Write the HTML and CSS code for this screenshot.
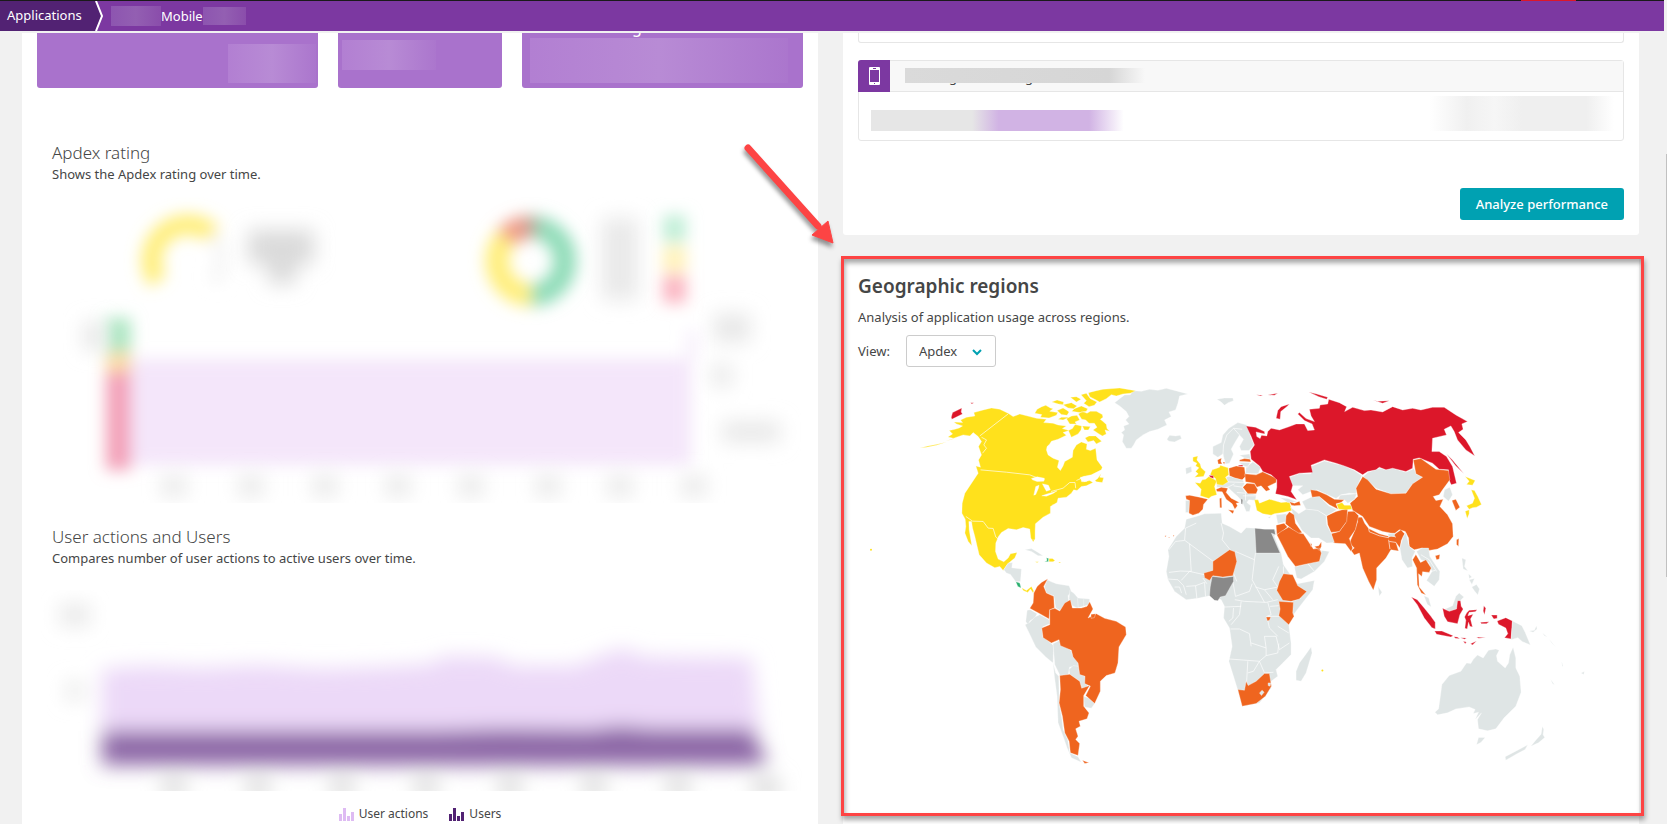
FILE: index.html
```html
<!DOCTYPE html>
<html lang="en">
<head>
  <meta charset="UTF-8">
  <title>Mobile application</title>
  <link rel="stylesheet" href="styles.css">
</head>
<body>
  <header class="topbar">
    <nav class="crumbs">
      <a class="crumb-root" href="#">Applications</a>
      <svg class="crumb-arrow" width="10" height="30" viewBox="0 0 10 30"><path class="crumb-fill" d="M0 0 L6 15 L0 30Z"/><path class="crumb-line" d="M1 0 L7 15 L1 30"/></svg>
      <a class="crumb-app" href="#"><span class="mask mask-before"></span>Mobile<span class="mask mask-after"></span></a>
    </nav>
    <span class="recording"></span>
  </header>

  <main class="dashboard">
    <section class="card left">
      <div class="tiles">
        <div class="tile"><span class="smudge smudge-end"></span></div>
        <div class="tile"><span class="smudge smudge-start"></span></div>
        <div class="tile"><span class="tile-label">g</span><span class="smudge smudge-full"></span></div>
      </div>

      <h3>Apdex rating</h3>
      <p class="sub">Shows the Apdex rating over time.</p>
      <svg class="chart apdex" viewBox="37 197 766 306">
        <defs>
          <filter id="soft" x="-50%" y="-50%" width="200%" height="200%"><feGaussianBlur stdDeviation="8"/></filter>
          <filter id="softer" x="-50%" y="-50%" width="200%" height="200%"><feGaussianBlur stdDeviation="10"/></filter>
        </defs>
        <g filter="url(#soft)">
          <path d="M158 281 A36 36 0 0 1 213 235" fill="none" stroke="#ffee7a" stroke-width="20"/>
          <path d="M213 235 A36 36 0 0 1 213 282" fill="none" stroke="#f6f6f6" stroke-width="14"/>
          <g fill="none" stroke-width="23">
            <path d="M531 227 A34 34 0 0 1 531 295" stroke="#8fdcb8"/>
            <path d="M531 295 A34 34 0 0 1 506 238" stroke="#ffee7a"/>
            <path d="M506 238 A34 34 0 0 1 531 227" stroke="#f09a85"/>
          </g>
          <path d="M525 218H538V235H525Z" fill="#b5a39b"/>
          <path d="M663 215H686V242H663Z" fill="#bfeed6"/>
          <path d="M663 246H686V272H663Z" fill="#fff2b8"/>
          <path d="M663 275H686V303H663Z" fill="#fbb3c0"/>
          <path d="M114 359H691V465H114Z" fill="#f4e6fa"/>
          <path d="M687 330H697V360H687Z" fill="#f6edfb"/>
          <path d="M106 318H131V352H106Z" fill="#ade6c2"/>
          <path d="M106 352H131V372H106Z" fill="#fbdca6"/>
          <path d="M106 372H131V470H106Z" fill="#f3a0b8"/>
        </g>
        <g filter="url(#softer)">
          <path d="M248 230H314V264H296V284H268V264H248Z" fill="#dadada"/>
          <path d="M602 218H638V300H602Z" fill="#e9e9e9"/>
          <path d="M84 322H104V350H84Z" fill="#e6e6e6"/>
          <path d="M714 314H750V342H714Z M712 365H732V386H712Z M722 422H780V442H722Z" fill="#e7e7e7"/>
          <path d="M162 476H186V496H162Z M239 476H263V496H239Z M313 476H337V496H313Z M386 476H410V496H386Z M459 476H483V496H459Z M536 476H560V496H536Z M608 476H632V496H608Z M682 476H706V496H682Z" fill="#e7e7e7"/>
        </g>
      </svg>

      <h3>User actions and Users</h3>
      <p class="sub">Compares number of user actions to active users over time.</p>
      <svg class="chart actions" viewBox="37 590 766 201">
        <g filter="url(#softer)">
          <path d="M60 604H90V626H60Z M66 682H84V700H66Z" fill="#e9e9e9"/>
          <path d="M102 669 L150 666 L200 668 L260 665 L320 669 L380 667 L430 664 L445 656 L495 657 L515 666 L575 666 L600 656 L622 648 L645 657 L752 658 L760 738 H102Z" fill="#ecd9f8"/>
          <path d="M102 731 L440 731 L500 729 L590 730 L620 726 L650 729 L752 729 L768 765 H102Z" fill="#8c66a6"/>
          <path d="M162 778H186V798H162Z M246 778H270V798H246Z M330 778H354V798H330Z M414 778H438V798H414Z M498 778H522V798H498Z M582 778H606V798H582Z M666 778H690V798H666Z M752 778H780V798H752Z" fill="#dcdcdc"/>
        </g>
      </svg>
      <div class="legend">
        <span><svg class="bars light" viewBox="0 0 15 13"><path d="M0 6H3V13H0ZM4 0H7V13H4ZM8 8H11V13H8ZM12 4H15V13H12Z"/></svg>User actions</span>
        <span><svg class="bars dark" viewBox="0 0 15 13"><path d="M0 6H3V13H0ZM4 0H7V13H4ZM8 8H11V13H8ZM12 4H15V13H12Z"/></svg>Users</span>
      </div>
    </section>

    <div class="column">
      <section class="card performance">
        <div class="box box-cut"></div>
        <div class="box">
          <div class="box-head">
            <span class="device"><svg width="11" height="18" viewBox="0 0 11 18"><path fill-rule="evenodd" d="M1 0H10Q11 0 11 1V17Q11 18 10 18H1Q0 18 0 17V1Q0 0 1 0ZM1 3V15H10V3ZM4 1V2H7V1ZM5 16V17H6V16Z"/></svg></span>
            <span class="box-name"><span>g</span><span>g</span></span>
          </div>
          <div class="box-body"><span class="metric"></span><span class="metric-end"></span></div>
        </div>
        <div class="actions-row"><button class="primary">Analyze performance</button></div>
      </section>

      <section class="card geo">
        <h2>Geographic regions</h2>
        <p>Analysis of application usage across regions.</p>
        <div class="view">
          <label for="view">View:</label>
          <div class="select-wrap">
            <select id="view"><option>Apdex</option></select>
            <svg width="10" height="7" viewBox="0 0 10 7"><path d="M1 1 L5 5 L9 1"/></svg>
          </div>
        </div>

        <svg class="map" viewBox="0 0 767 390">
          <!-- North America -->
          <g transform="translate(62 0) scale(.3333)">
            <path class="none" d="M585 68L600 56L615 45L632 44L640 32L665 34L690 28L715 31L740 25L768 32L805 42L780 48L775 70L768 90L748 96L755 110L735 120L742 135L715 148L690 155L670 165L650 180L642 195L635 205L620 205L608 185L612 165L605 158L615 150L612 138L628 132L618 120L628 110L620 95L600 78Z"/>
            <path class="fair" d="M75 185L104 176L84 171L98 162L88 152L105 148L118 144L128 138L110 132L102 126L128 128L122 120L140 112L165 108L162 98L190 90L215 84L240 88L265 100L280 110L300 102L330 110L350 115L380 118L372 128L400 130L415 135L440 138L428 146L448 152L430 158L440 166L415 178L395 184L390 192L382 200L380 210L385 225L400 235L418 242L413 262L422 272L430 258L435 245L458 232L460 212L470 195L485 186L502 192L500 208L512 212L528 205L532 240L548 262L545 270L515 285L490 290L478 298L470 302L500 290L492 306L510 302L520 308L500 318L485 320L472 332L462 330L455 340L440 352L415 355L412 368L402 374L392 380L392 400L370 412L347 432L346 455L346 478L340 486L333 475L330 448L310 443L290 450L265 446L245 458L236 470L228 490L227 515L235 538L252 546L265 535L272 522L292 518L285 535L272 545L262 555L250 572L240 560L225 564L200 550L178 525L172 500L165 470L158 445L155 425L147 425L148 450L152 475L156 498L145 485L135 460L138 440L136 418L126 400L127 370L135 340L155 310L175 280L168 258L182 262L176 240L185 225L176 200L185 185L175 170L160 158L150 168L130 165L110 172Z"/>
            <path class="fair" d="M345 100L352 88L366 80L378 76L392 84L400 86L390 94L414 98L410 106L388 114L362 112L366 104ZM396 66L412 60L432 66L430 74L416 72ZM430 74L455 68L472 78L462 86L445 84ZM452 52L470 50L484 58L470 66ZM412 92L430 84L440 90L448 96L442 106L425 104ZM456 94L464 86L485 78L504 86L500 94L480 98ZM484 44L500 40L512 56L532 66L524 76L508 80L492 70L500 62ZM506 38L530 32L550 28L600 24L648 32L632 40L610 42L590 48L575 44L560 56L540 66L525 58L510 50ZM476 102L488 94L502 100L512 94L530 94L548 104L550 112L542 118L552 126L560 134L562 146L570 154L556 150L560 162L548 168L538 162L520 150L532 142L524 130L508 130L498 120L486 118ZM440 116L456 108L472 106L480 120L466 126L470 132L450 132ZM446 152L458 146L466 134L486 138L484 150L475 162L455 172ZM488 138L512 140L506 150L494 150ZM496 174L508 168L528 168L546 184L530 192L522 182L505 186ZM448 112L430 120L415 118L425 112ZM526 302L534 296L545 280L540 292L552 294L548 308L530 306Z"/>
            <path class="fair" d="M0 204L24 198L48 194L80 186L50 196L20 202Z"/>
            <path class="poor" d="M94 112L98 98L126 84L124 96L128 102L108 112L96 118ZM152 68L162 68L156 72Z"/>
            <path class="water" d="M335 296L352 291L374 295L372 304L352 305L338 300ZM342 346L348 320L358 316L356 325L348 344ZM368 312L386 316L392 330L380 334L372 320ZM366 348L384 342L400 337L412 333L400 341L380 349Z"/>
            <path class="border" d="M182 270L260 277L330 285L350 293L375 300M180 168L265 102M138 410L158 424L190 425L205 445L220 446L228 472L236 478M394 335L430 325L450 308L466 308L468 325M185 172L200 180L192 195L200 205L188 220M400 374L402 384"/>
            <path class="water" d="M482 292L510 290L502 304L486 306Z"/>
          </g>

          <!-- Central and South America -->
          <g transform="translate(142 160) scale(.3333)">
            <path class="none" d="M12 90L25 70L38 68L36 84L65 88L62 125L48 126L32 104L20 100ZM75 30L95 26L115 38L130 48L115 48L95 35Z"/>
            <path class="good" d="M48 126L60 130L64 145L54 140ZM140 54L147 56L146 66L134 65L142 62Z"/>
            <path class="fair" d="M66 144L80 152L95 140L102 154L100 160L92 148L84 158L70 152ZM148 56L158 56L166 62L160 66L148 66ZM106 66L117 66L112 69ZM176 67L184 67L180 70ZM96 0L103 0L102 6Z"/>
            <path class="none" d="M142 120L155 126L170 132L208 138L215 155L205 168L207 185L180 212L168 205L162 168L140 160L134 142Z"/>
            <path class="none" d="M210 152L222 160L235 175L270 178L268 195L232 205L218 198L208 178ZM233 175L236 205M252 178L252 200"/>
            <path class="none" d="M82 212L92 210L112 222L105 235L90 244L86 260L78 245Z"/>
            <path class="none" d="M76 255L90 248L105 232L120 225L148 240L150 252L128 262L128 290L150 308L162 318L160 370L138 352L108 322L92 288Z"/>
            <path class="none" d="M160 312L180 302L215 335L222 355L235 360L236 380L210 382L206 404L182 410L165 375Z"/>
            <path class="none" d="M208 390L220 378L236 380L242 404L262 412L268 430L258 446L240 445L240 425L210 405Z"/>
            <path class="none" d="M160 370L168 400L177 410L178 460L178 490L186 535L190 570L204 600L210 640L235 652L245 668L215 655L202 625L190 590L175 550L172 470L164 410Z"/>
            <path class="none" d="M252 470L268 476L285 492L275 506L254 502Z"/>
            <path class="low" d="M102 160L112 140L125 128L144 117L132 140L140 160L162 170L164 205L150 210L148 238L120 222L90 206L100 190Z"/>
            <path class="low" d="M150 210L165 206L180 214L195 190L212 180L218 205L245 205L262 200L270 186L280 208L265 235L290 222L315 236L350 245L378 262L380 285L358 322L355 370L346 400L320 408L302 425L302 455L285 492L258 468L272 440L255 432L256 410L240 405L235 370L220 352L215 332L182 318L178 300L155 310L130 294L126 265L150 255Z"/>
            <path class="low" d="M180 408L210 404L240 425L246 446L270 438L252 468L252 500L268 520L262 538L238 545L242 560L228 568L235 590L228 600L240 612L235 648L212 640L208 605L195 580L188 530L178 490L182 450ZM248 662L268 670L255 672Z"/>
            <path class="low" d="M274 224L288 222L284 234L274 236Z"/>
          </g>

          <!-- Africa -->
          <g transform="translate(292 120) scale(.3333)">
            <path class="none" d="M110 58L140 50L165 42L215 40L218 70L240 80L275 100L290 84L318 85L380 92L375 110L395 160L402 195L430 235L445 252L495 242L490 270L455 315L432 345L418 375L425 430L425 465L400 490L380 510L385 530L365 545L365 565L330 610L280 620L265 572L255 540L238 485L248 440L240 385L222 355L225 320L215 300L190 290L180 288L145 296L110 300L75 275L55 240L50 215L58 170L55 150L80 110L105 85Z"/>
            <path class="none" d="M485 442L488 460L470 520L455 545L440 542L440 515L450 490L465 470Z"/>
            <path class="border" d="M58 150L78 125L105 122L108 85L140 70M106 122L190 184M120 132L125 215L92 214L58 218M215 70L222 100L218 120L230 135L242 150M258 155L315 180L318 160M315 180L308 240L320 262L345 308M318 262L345 270L385 262M250 245L258 290L300 275L308 252M250 215L262 245M256 300L285 305L350 308L385 300M355 308L365 345L352 350L360 385L385 410M275 305L270 345L245 375M243 388L270 388L300 402L305 440M305 430L350 445L345 410L380 410M238 478L330 485L350 468L350 445M350 468L385 460M295 485L290 570M330 485L312 515L295 520M330 485L345 520L372 518M380 410L390 450L420 430M385 460L388 432M225 322L275 320M252 325L250 355L238 365M55 238L85 240L102 258L110 285M110 260L138 258L142 296M95 242L120 215L165 225M138 258L165 248L168 290M160 235L172 252M75 262L90 262L96 280M362 320L388 318M355 350L390 350M402 200L402 222M425 305L455 295M385 380L418 400M345 270L370 300M388 200L370 240L385 262"/>
            <path class="low" d="M163 220L190 212L190 185L240 150L256 156L262 185L250 228L220 232L190 228L180 242L165 234Z"/>
            <path class="unknown" d="M188 230L222 234L252 230L252 245L238 270L228 288L212 292L205 303L195 302L180 288L182 262Z"/>
            <path class="unknown" d="M316 85L345 88L375 88L378 105L366 100L392 160L320 160Z"/>
            <path class="low" d="M402 222L430 225L445 258L472 275L450 298L425 305L400 302L382 272L390 245Z"/>
            <path class="low" d="M388 305L405 306L432 308L430 340L434 350L418 375L388 348L392 328Z"/>
            <path class="low" d="M350 352L364 352L360 362L354 364Z"/>
            <path class="low" d="M265 570L285 572L290 545L296 558L320 545L345 522L360 522L366 560L348 590L320 612L278 620Z"/>
            <path class="none" d="M330 580L338 572L344 578L336 588ZM356 550L364 550L362 560L356 558Z"/>
            <path class="low" d="M46 108L50 108L49 111L46 111ZM56 112L60 112L59 115ZM70 107L74 106L72 111Z"/>
          </g>

          <!-- Europe -->
          <g transform="translate(302 0) scale(.3333)">
            <path class="none" d="M22 178L30 166L48 168L62 166L66 176L45 186L28 184ZM172 58L195 54L220 54L222 62L206 68L195 76L185 66ZM78 265L95 260L97 276L80 283Z"/>
            <path class="none" d="M160 222L160 200L185 188L190 165L208 145L235 128L262 135L268 150L275 175L284 195L268 212L245 212L240 200L252 178L240 165L225 190L215 208L222 222L210 250L198 252L190 222L175 232Z"/>
            <path class="border" d="M190 228L192 195L202 165L222 145L240 165M222 145L248 148"/>
            <path class="none" d="M240 226L270 222L274 238L255 234ZM238 248L272 248L265 262L252 258ZM260 262L280 246L304 262L296 282L258 280Z"/>
            <path class="none" d="M78 362L90 362L88 398L78 398Z"/>
            <path class="none" d="M172 314L205 305L200 292L215 288L250 300L255 312L248 322L258 338L290 345L288 362L268 360L262 368L274 378L270 395L260 395L248 365L235 350L218 335L205 322L172 322Z"/>
            <path class="border" d="M205 306L255 308M222 318L248 322M205 322L225 312M232 338L258 340L258 362M250 348L290 348M210 288L250 300"/>
            <path class="fair" d="M100 232L115 228L112 240L122 252L125 264L138 276L132 290L105 292L116 282L108 275L118 264L108 258L112 250L100 244Z"/>
            <path class="fair" d="M106 308L122 310L128 300L138 298L148 290L172 303L165 320L172 345L155 350L148 356L122 348L125 328Z"/>
            <path class="fair" d="M152 284L158 270L170 266L180 262L182 256L206 264L208 285L198 292L206 306L190 316L172 314L168 296Z"/>
            <path class="poor" d="M148 286L162 288L162 296L152 292ZM236 256L250 255L250 260L238 260Z"/>
            <path class="low" d="M78 348L90 346L120 352L145 358L132 374L130 388L118 400L100 406L88 400L90 362L80 358ZM174 240L186 234L184 244L188 252L176 252ZM190 246L196 246L194 254ZM208 265L230 258L255 262L258 290L248 300L225 294L210 288Z"/>
            <path class="low" d="M170 328L185 322L205 325L200 338L215 355L240 368L230 370L234 378L226 388L218 372L200 358L188 336L172 335ZM206 390L224 392L220 402ZM180 356L186 354L187 384L181 384Z"/>
            <path class="low" d="M250 322L262 310L285 312L295 330L290 342L265 342ZM256 282L290 285L310 276L335 288L352 295L350 308L325 320L332 330L320 334L305 318L292 322L285 310L258 306ZM240 240L255 236L272 238L274 246L240 244Z"/>
            <path class="fair" d="M285 360L296 360L300 370L330 358L365 368L390 366L398 392L370 398L345 402L335 406L310 402L292 392Z"/>
            <path class="none" d="M362 354L385 356L412 366L385 368ZM350 405L382 402L380 425L355 432ZM325 412L335 410L330 415Z"/>
            <path class="low" d="M390 366L405 370L420 364L424 376L405 378L396 376Z"/>
            <path class="unknown" d="M244 356L250 360L249 374L245 370Z"/>
          </g>

          <!-- Asia -->
          <g transform="translate(382 0) scale(.3333)">
            <path class="none" d="M150 292L180 282L215 282L215 260L255 243L290 252L315 258L345 272L368 288L362 300L352 325L350 342L330 340L305 345L290 356L265 345L232 330L215 335L190 345L175 330L190 318L160 318Z"/>
            <path class="none" d="M372 290L385 278L420 265L440 270L460 265L500 277L525 266L530 282L550 292L520 312L500 340L455 342L410 325Z"/>
            <path class="poor" d="M20 138L48 142L75 155L76 162L50 156L52 170L62 176L66 166L82 168L85 155L95 145L120 150L150 140L170 132L195 132L205 152L225 150L218 132L195 122L175 102L180 98L200 116L225 125L215 108L210 88L240 85L242 75L265 72L268 58L300 68L322 80L316 95L340 82L375 92L395 90L430 96L460 80L490 90L520 85L545 90L580 82L615 82L650 105L685 125L668 132L672 148L658 158L680 180L692 200L707 228L680 210L655 180L645 155L635 138L615 148L622 165L580 175L578 215L600 215L622 230L640 260L652 310L636 315L625 290L628 270L600 268L580 250L540 234L522 238L520 265L500 275L460 265L440 270L420 262L410 270L385 275L370 285L345 270L315 258L290 250L255 240L215 256L220 278L180 280L150 290L160 316L155 335L172 360L145 350L108 342L112 322L112 300L95 285L70 275L60 258L35 238L32 215L45 195L35 170Z"/>
            <path class="poor" d="M110 115L115 92L125 80L150 72L142 80L124 95L122 118ZM208 36L232 42L265 52L262 58L238 50ZM400 60L415 64L450 62L430 70ZM622 222L640 240L674 282L650 258ZM50 44L70 46L64 48ZM85 45L115 40L105 46Z"/>
            <path class="low" d="M370 290L385 300L410 328L455 342L500 340L520 312L550 292L530 282L522 240L545 236L590 268L628 272L632 300L610 330L600 345L582 350L590 362L612 358L602 380L625 405L640 432L642 470L625 492L595 508L570 512L548 505L525 510L510 500L508 475L498 455L480 450L465 462L430 455L390 440L370 410L340 392L332 370L355 350L350 325Z"/>
            <path class="low" d="M350 412L368 412L376 430L388 446L420 462L450 470L468 462L485 450L496 462L486 482L482 505L470 488L478 514L455 510L440 535L412 565L412 600L402 632L388 605L370 565L360 520L345 526L335 512L345 505L330 490L345 455L355 425Z"/>
            <path class="low" d="M275 462L300 455L318 430L325 395L345 394L358 408L354 425L348 450L330 476L340 505L335 515L318 492L282 490Z"/>
            <path class="low" d="M262 408L290 395L325 385L322 425L300 455L275 458L265 435Z"/>
            <path class="border" d="M388 446L390 456L420 468L448 474L450 466M448 480L452 508M470 488L450 485M448 464L470 472"/>
            <path class="none" d="M446 462L466 460L466 470L448 470Z"/>
            <path class="none" d="M302 346L352 342L346 358L325 370L315 360L296 360Z"/>
            <path class="none" d="M188 365L215 352L240 350L268 378L292 390L262 408L235 392L200 388Z"/>
            <path class="low" d="M213 330L232 332L262 345L285 358L315 360L305 368L290 372L296 388L270 375L240 350L218 352Z"/>
            <path class="fair" d="M292 374L308 368L315 376L334 376L338 388L318 390L298 388Z"/>
            <path class="none" d="M153 382L178 402L200 388L235 392L260 408L262 435L275 460L285 488L262 490L238 475L215 475L188 452L165 412Z"/>
            <path class="none" d="M165 562L205 552L225 575L185 598L172 595ZM205 550L240 545L246 512L270 515L255 545L225 575Z"/>
            <path class="low" d="M140 408L150 396L164 405L168 430L188 458L175 462L150 442L138 432ZM110 436L134 430L144 442L120 462L112 464Z"/>
            <path class="low" d="M112 465L125 455L148 442L178 460L192 462L210 490L222 508L240 505L246 520L240 545L205 552L168 560L145 530L130 500ZM214 488L218 496L214 500ZM225 500L238 498L246 486L246 500L240 512Z"/>
            <path class="none" d="M482 505L492 470L500 460L510 500L528 515L518 535L520 560L505 565L488 540Z"/>
            <path class="none" d="M532 515L548 505L568 505L572 530L602 575L600 600L585 620L562 602L578 575L568 548L545 540Z"/>
            <path class="border" d="M545 525L570 540L592 575M562 578L588 572"/>
            <path class="low" d="M520 540L530 524L544 548L560 540L576 565L570 578L550 576L548 590L538 582L540 622L560 646L546 640L534 615L532 565ZM588 528L602 524L600 538L592 540ZM652 480L659 476L658 500L652 494ZM638 362L650 358L662 382L650 392Z"/>
            <path class="none" d="M612 350L616 330L632 322L640 345L628 364ZM416 620L428 638L420 650Z"/>
            <path class="fair" d="M678 290L708 302L700 316L682 314L690 304ZM696 330L706 332L716 350L727 374L712 382L700 384L690 388L682 378L700 370L706 355ZM678 394L690 390L690 402L684 416Z"/>
          </g>

          <!-- Oceania -->
          <g transform="translate(532 120) scale(.3333)">
            <path class="none" d="M218 175L230 180L226 200L236 214L222 208ZM248 262L262 254L271 268L266 286L256 274ZM238 222L248 232L240 236ZM240 240L256 236L248 254ZM104 288L118 294L126 322L114 314ZM168 328L190 318L200 290L210 280L224 292L212 304L205 306L202 328L180 335Z"/>
            <path class="poor" d="M160 326L180 335L202 328L205 303L214 303L216 320L222 328L212 345L205 372L175 366L165 350ZM66 292L84 300L105 325L125 350L138 368L138 388L128 384L105 355L84 315ZM136 394L158 394L192 408L185 412L142 404ZM194 411L204 412L212 417L198 416ZM214 414L232 415L226 419ZM222 425L232 427L228 432ZM244 432L262 424L250 436ZM232 340L240 332L264 330L258 336L240 338L236 348L252 344L244 358L250 382L242 380L238 368L234 388L227 386L230 362L226 352ZM284 318L290 326L286 345L282 334ZM274 368L300 366L292 372L276 372ZM306 346L324 346L324 356L314 358ZM324 364L350 354L370 364L366 418L346 414L356 402L350 385L328 374ZM262 412L290 414L268 416Z"/>
            <path class="none" d="M370 364L398 378L408 398L424 436L400 426L386 414L366 420ZM420 394L436 392L442 378L444 388L432 398ZM460 400L475 412L466 408ZM480 418L500 442L488 430ZM485 540L497 556L490 552ZM576 520L586 516L584 525ZM518 486L522 500L519 500Z"/>
            <path class="none" d="M137 638L148 628L152 600L158 555L180 528L215 515L232 490L245 492L252 480L265 466L282 475L298 452L320 448L330 452L322 468L325 485L348 505L358 490L362 465L372 443L380 475L380 505L392 530L396 578L380 620L345 655L320 688L295 694L268 688L265 660L277 640L258 660L268 638L252 642L258 630L240 622L200 628L175 640L145 646Z"/>
            <path class="none" d="M268 714L288 714L276 728L262 736ZM460 680L464 690L462 706L467 714L448 730L425 740L440 722L456 704ZM348 772L380 755L416 736L408 750L385 762L350 782Z"/>
          </g>
          <circle class="fair" cx="13" cy="170" r="1"/>
          <circle class="fair" cx="465" cy="291" r="1"/>
        </svg>

        <svg class="pointer" width="104" height="112" viewBox="0 0 104 112">
          <path d="M10 12L80 90" stroke-linecap="round"/>
          <path class="tip" d="M95 107L90 85L74 99Z"/>
        </svg>
      </section>
    </div>
    <span class="scroll-thumb"></span>
  </main>
</body>
</html>
```
FILE: styles.css
```css
* {
  box-sizing: border-box;
}

body {
  margin: 0;
  height: 100vh;
  overflow: hidden;
  display: flex;
  flex-direction: column;
  background-color: #f1f1f1;
  color: #454646;
  font-family: "Noto Sans", "Open Sans", sans-serif;
  font-size: 13px;
  line-height: 20px;
}

h2, h3, p {
  margin: 0;
}

/* top bar */
.topbar {
  position: relative;
  flex: none;
  height: 31px;
  margin-right: 3px;
  border-top: 1px solid #1a1a1a;
  background-color: #7c38a1;
}

.crumbs {
  display: flex;
  height: 30px;
  line-height: 28px;
}

.crumbs a {
  color: #ffffff;
  text-decoration: none;
}

.crumb-root {
  width: 95px;
  padding-left: 7px;
  background-color: #522273;
}

.crumb-fill {
  fill: #522273;
}

.crumb-line {
  fill: none;
  stroke: #ffffff;
  stroke-width: 2;
}

.crumb-app {
  display: flex;
  align-items: center;
  margin-left: 6px;
}

.mask {
  height: 20px;
  background: linear-gradient(90deg, #8d55b0, #935fb2, #8a4dab);
}

.mask-before {
  width: 50px;
}

.mask-after {
  width: 43px;
  height: 18px;
}

.recording {
  position: absolute;
  top: -1px;
  right: 88px;
  width: 55px;
  height: 1px;
  background-color: #dc172a;
}

/* layout */
.dashboard {
  position: relative;
  flex: 1;
  min-height: 0;
  display: grid;
  grid-template-columns: 1fr 1fr;
  gap: 25px;
  padding: 2px 28px 0 22px;
}

.column {
  display: flex;
  flex-direction: column;
  gap: 23px;
  min-width: 0;
}

.card {
  background-color: #ffffff;
}

.left {
  padding: 0 15px;
  min-width: 0;
}

.tiles {
  display: grid;
  grid-template-columns: 281fr 164fr 281fr;
  gap: 20px;
  height: 55px;
  margin-bottom: 54px;
}

.tile {
  position: relative;
  overflow: hidden;
  display: flex;
  background-color: #a972cc;
  border-radius: 0 0 3px 3px;
}

.tile-label {
  position: absolute;
  left: 110px;
  top: -16px;
  color: #ffffff;
  font-size: 16px;
  line-height: 20px;
}

.smudge {
  background: linear-gradient(90deg, #b27fd2, #b88bd5, #ab76cd);
}

.smudge-end {
  width: 88px;
  height: 39px;
  margin: 11px 2px 0 auto;
}

.smudge-start {
  width: 94px;
  height: 30px;
  margin: 7px 0 0 4px;
}

.smudge-full {
  flex: 1;
  height: 45px;
  margin: 5px 15px 0 8px;
}

.left h3 {
  margin-left: 15px;
  font-size: 17px;
  font-weight: 300;
  line-height: 22px;
}

.sub {
  margin-left: 15px;
}

.chart {
  display: block;
  width: 100%;
  height: auto;
}

.apdex {
  margin: 13px 0 23px;
}

.actions {
  margin: 22px 0 13px;
}

.legend {
  display: flex;
  justify-content: center;
  gap: 21px;
  font-size: 12px;
}

.legend span {
  display: flex;
  align-items: center;
  gap: 5px;
}

.bars {
  width: 15px;
  height: 13px;
}

.light {
  fill: #debbf3;
}

.dark {
  fill: #522273;
}

/* performance card */
.performance {
  height: 202px;
  padding: 0 15px;
  border-radius: 0 0 3px 3px;
}

.box {
  border: 1px solid #e6e6e6;
  border-radius: 3px;
}

.box-cut {
  height: 10px;
  margin-bottom: 17px;
  border-top: none;
  border-radius: 0 0 3px 3px;
}

.box-head {
  display: flex;
  height: 31px;
  background-color: #f8f8f8;
  border-bottom: 1px solid #e6e6e6;
}

.device {
  display: flex;
  align-items: center;
  justify-content: center;
  width: 32px;
  height: 32px;
  margin: -1px 0 0 -1px;
  background-color: #7c38a1;
  border-radius: 3px 0 0 0;
}

.device svg {
  fill: #ffffff;
}

.box-name {
  position: relative;
  display: flex;
  gap: 68px;
  width: 240px;
  height: 19px;
  margin: 7px 0 0 15px;
  padding-left: 44px;
  line-height: 18px;
}

.box-name::after {
  content: "";
  position: absolute;
  inset: 0 0 4px 0;
  background: linear-gradient(90deg, #dadada, #d6d6d6 85%, #f8f8f8);
}

.box-body {
  display: flex;
  justify-content: space-between;
  height: 48px;
  padding: 4px 9px 0 12px;
}

.metric {
  width: 266px;
  height: 21px;
  margin-top: 14px;
  background: linear-gradient(90deg, #e6e6e6 38%, #d1b3e4 48%, #d1b3e4 82%, #ffffff 95%);
}

.metric-end {
  width: 184px;
  height: 35px;
  background: linear-gradient(90deg, #ffffff, #f0f0f0 20%, #f6f6f6 35%, #efefef 50%, #efefef 85%, #ffffff);
}

.actions-row {
  display: flex;
  justify-content: flex-end;
  margin-top: 47px;
}

.primary {
  height: 32px;
  padding: 0 16px;
  border: none;
  border-radius: 3px;
  background-color: #00a1b2;
  color: #ffffff;
  font: 500 13px "Noto Sans", "Open Sans", sans-serif;
  cursor: pointer;
}

/* geographic regions */
.geo {
  position: relative;
  flex: 1;
  min-height: 0;
  padding: 16px 15px 0;
}

.geo::after {
  content: "";
  position: absolute;
  inset: -2px -5px 8px -2px;
  border: 3px solid #fd4444;
  box-shadow: 1px 4px 5px rgba(0, 0, 0, 0.35), inset 1px 4px 5px rgba(0, 0, 0, 0.35);
  pointer-events: none;
}

.geo h2 {
  font-size: 19px;
  font-weight: 600;
  line-height: 24px;
}

.geo p {
  margin-top: 9px;
}

.view {
  display: flex;
  align-items: center;
  gap: 16px;
  margin: 8px 0 13px;
}

.select-wrap {
  position: relative;
}

.select-wrap svg {
  position: absolute;
  right: 14px;
  top: 14px;
  fill: none;
  stroke: #00a1b2;
  stroke-width: 2;
  pointer-events: none;
}

select {
  appearance: none;
  display: block;
  width: 90px;
  height: 32px;
  padding: 0 12px;
  border: 1px solid #cccccc;
  border-radius: 3px;
  background-color: #ffffff;
  color: #454646;
  font: 13px "Noto Sans", "Open Sans", sans-serif;
}

.map {
  display: block;
  width: 100%;
  height: auto;
}

.map path {
  stroke: #ffffff;
  stroke-width: 1;
  stroke-linejoin: round;
}

.map .border {
  fill: none;
  stroke-width: 2;
}

.water {
  fill: #ffffff;
}

.none {
  fill: #dfe5e5;
}

.good {
  fill: #2ab06f;
}

.fair {
  fill: #ffe11c;
}

.low {
  fill: #ef651f;
}

.poor {
  fill: #dc172a;
}

.unknown {
  fill: #898989;
}

.pointer {
  position: absolute;
  left: -105px;
  top: -122px;
  filter: drop-shadow(-1px 4px 2px rgba(0, 0, 0, 0.4));
}

.pointer path {
  fill: none;
  stroke: #fd4444;
  stroke-width: 7;
}

.pointer .tip {
  fill: #fd4444;
  stroke-width: 1;
}

.scroll-thumb {
  position: absolute;
  right: 0;
  top: 123px;
  width: 1px;
  height: 423px;
  background-color: #c1c1c1;
}
```
